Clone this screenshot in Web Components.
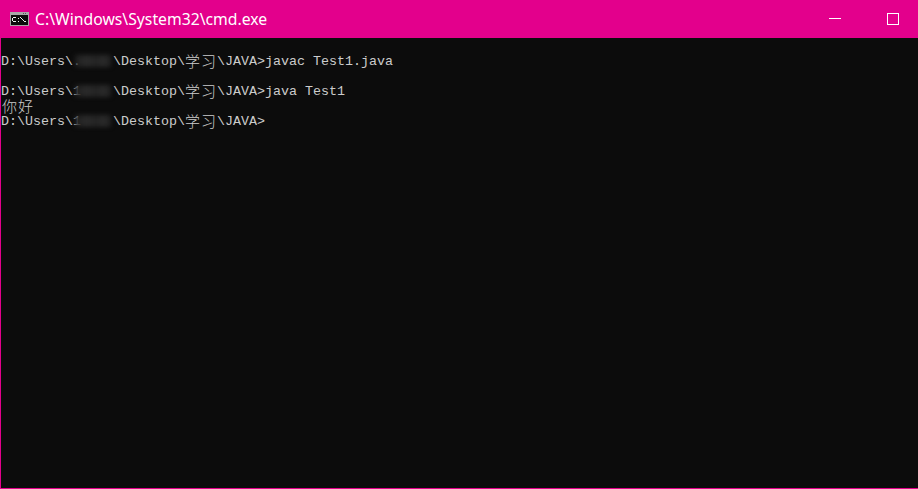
<!DOCTYPE html>
<html>
<head>
<meta charset="utf-8">
<title>cmd</title>
<style>
html,body{margin:0;padding:0;height:100%;background:#0c0c0c;overflow:hidden;}
</style>
</head>
<body>
<template id="tplWindow">
  <style>
    :host{display:flex;flex-direction:column;width:918px;height:489px;box-sizing:border-box;
      border:solid #e3008c;border-width:0 0 1px 1px;background:#0c0c0c;}
    .body{flex:1;padding-top:16px;}
  </style>
  <title-bar></title-bar>
  <div class="body"><slot></slot></div>
</template>

<template id="tplBar">
  <style>
    :host{display:flex;align-items:center;height:38px;flex:none;background:#e3008c;color:#fff;
      font:15.75px "Noto Sans",sans-serif;margin-left:-1px;}
    svg{display:block;flex:none;}
    .icon{margin-left:10px;margin-right:6px;}
    .name{flex:1;white-space:nowrap;}
    .min{margin-right:46px;}
    .max{margin-right:19px;}
  </style>
  <svg class="icon" width="19" height="14" viewBox="0 0 19 14" shape-rendering="crispEdges">
    <rect x="0" y="0" width="19" height="14" fill="#a8a8a8"/>
    <rect x="13" y="1" width="1" height="1" fill="#555"/><rect x="15" y="1" width="1" height="1" fill="#555"/>
    <rect x="1" y="3" width="17" height="10" fill="#0c0c0c"/>
    <path d="M3 5h3v1h-3zM2 6h1v3h-1zM3 9h3v1h-3zM8 6h1v1h-1zM8 9h1v1h-1zM10 5h1v1h-1zM11 6h1v1h-1zM12 7h1v1h-1zM13 8h1v1h-1zM14 9h2v1h-2z" fill="#f0f0f0"/>
  </svg>
  <span class="name">C:\Windows\System32\cmd.exe</span>
  <svg class="min" width="12" height="12" viewBox="0 0 12 12"><rect x="0" y="5" width="12" height="1" fill="#fff"/></svg>
  <svg class="max" width="12" height="12" viewBox="0 0 12 12"><rect x=".5" y=".5" width="11" height="11" fill="none" stroke="#fff"/></svg>
</template>

<template id="tplLine">
  <style>
    :host{display:block;height:15px;color:#ccc;
      font:13.33px/15px "Liberation Mono","Noto Sans CJK SC",monospace;}
    .row{display:flex;height:15px;white-space:pre;}
    .cjk{font:15px/13px "Noto Sans CJK SC",sans-serif;font-weight:300;letter-spacing:1px;}
    .hid{display:flex;width:40px;height:15px;}
    .hid b{font-weight:normal;width:8px;flex:none;}
    .hid i{display:block;flex:none;width:36px;height:12px;margin:1px 0 0 -6px;
      background:linear-gradient(90deg,#1e1e1e,#2a2a2a 30%,#232323 60%,#2a2a2a 80%,#1e1e1e);filter:blur(2px);}
  </style>
  <div class="row"><span>D:\Users\</span><span class="hid"><b id="mark"></b><i></i></span><span>\Desktop\</span><span class="cjk">学习</span><span>\JAVA&gt;</span><slot></slot></div>
</template>

<template id="tplOut">
  <style>
    :host{display:block;height:15px;padding-left:1px;color:#ccc;letter-spacing:1px;
      font:15px/13px "Noto Sans CJK SC",sans-serif;font-weight:300;}
  </style>
  <slot></slot>
</template>

<cmd-window>
  <prompt-line mark=".">javac Test1.java</prompt-line>
  <out-line></out-line>
  <prompt-line mark="1">java Test1</prompt-line>
  <out-line>你好</out-line>
  <prompt-line mark="1"></prompt-line>
</cmd-window>

<script>
function mount(el, id) {
  el.attachShadow({ mode: 'open' }).appendChild(document.getElementById(id).content.cloneNode(true));
}
class TitleBar extends HTMLElement { constructor() { super(); mount(this, 'tplBar'); } }
class CmdWindow extends HTMLElement { constructor() { super(); mount(this, 'tplWindow'); } }
class PromptLine extends HTMLElement {
  constructor() { super(); mount(this, 'tplLine'); }
  connectedCallback() { this.shadowRoot.getElementById('mark').textContent = this.getAttribute('mark') || ''; }
}
class OutLine extends HTMLElement { constructor() { super(); mount(this, 'tplOut'); } }
customElements.define('title-bar', TitleBar);
customElements.define('cmd-window', CmdWindow);
customElements.define('prompt-line', PromptLine);
customElements.define('out-line', OutLine);
</script>
</body>
</html>
